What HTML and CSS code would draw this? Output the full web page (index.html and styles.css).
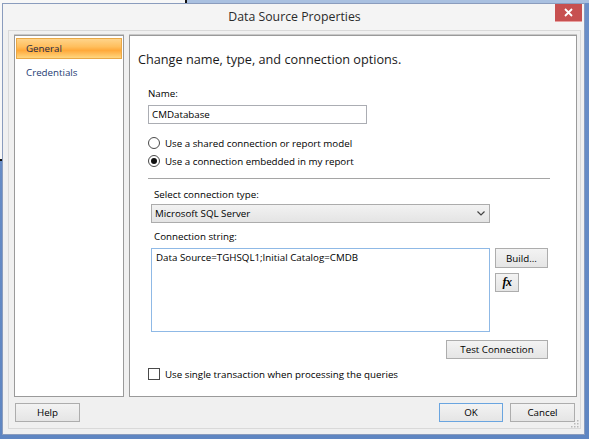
FILE: index.html
```html
<!DOCTYPE html>
<html>
<head>
<meta charset="utf-8">
<link rel="stylesheet" href="styles.css">
</head>
<body>
<div class="bgwin"></div>
<div class="desktop">
  <div class="dialog">
    <div class="titlebar">
      <span></span>
      <div class="title">Data Source Properties</div>
      <div class="close-cell">
        <div class="close"><svg width="9" height="9" viewBox="0 0 9 9"><path d="M1 1L8 8M8 1L1 8" stroke="#fff" stroke-width="1.8"/></svg></div>
      </div>
    </div>
    <div class="frame">
      <div class="panes">
        <nav class="nav">
          <div class="nav-item active">General</div>
          <div class="nav-item">Credentials</div>
        </nav>
        <section class="content">
          <h1 class="heading">Change name, type, and connection options.</h1>
          <div class="form">
            <div class="lbl">Name:</div>
            <div class="textbox">CMDatabase</div>
            <div class="opt-row first"><span class="radio"></span>Use a shared connection or report model</div>
            <div class="opt-row"><span class="radio checked"></span>Use a connection embedded in my report</div>
            <div class="sep"></div>
            <div class="conn">
              <div class="lbl sub first-sub">Select connection type:</div>
              <div class="select"><span>Microsoft SQL Server</span><svg width="8" height="5" viewBox="0 0 8 5"><path d="M0.5 0.5L4 4L7.5 0.5" fill="none" stroke="#444" stroke-width="1.2"/></svg></div>
              <div class="lbl sub conn-lbl">Connection string:</div>
              <div class="conn-grid">
                <div class="textarea">Data Source=TGHSQL1;Initial Catalog=CMDB</div>
                <div class="side">
                  <div class="btn build">Build...</div>
                  <div class="btn fx"><span>fx</span></div>
                </div>
              </div>
              <div class="test-row"><div class="btn test">Test Connection</div></div>
            </div>
            <div class="opt-row check-row"><span class="checkbox"></span>Use single transaction when processing the queries</div>
          </div>
        </section>
      </div>
      <div class="buttons">
        <div class="btn help">Help</div>
        <span class="spacer"></span>
        <div class="btn ok">OK</div>
        <div class="btn cancel">Cancel</div>
      </div>
    </div>
    <svg class="grip" width="8" height="8" viewBox="0 0 8 8">
      <rect x="6" y="0" width="1.5" height="1.5" fill="#b8b8b8"/>
      <rect x="3" y="3" width="1.5" height="1.5" fill="#b8b8b8"/>
      <rect x="6" y="3" width="1.5" height="1.5" fill="#b8b8b8"/>
      <rect x="0" y="6" width="1.5" height="1.5" fill="#b8b8b8"/>
      <rect x="3" y="6" width="1.5" height="1.5" fill="#b8b8b8"/>
      <rect x="6" y="6" width="1.5" height="1.5" fill="#b8b8b8"/>
    </svg>
  </div>
</div>
</body>
</html>
```

FILE: styles.css
```css
* { box-sizing: border-box; }
html, body {
  margin: 0;
  padding: 0;
  width: 589px;
  height: 439px;
  overflow: hidden;
}
body {
  background: linear-gradient(#a9c0e0 0, #a9c0e0 3px, #6b8fc8 3px, #5f86c2 100%);
  font-family: "Open Sans", "Noto Sans", sans-serif;
  font-size: 9.75px;
  color: #000;
  position: relative;
}
.bgwin {
  position: absolute;
  left: 0;
  top: 0;
  width: 187px;
  height: 161px;
  background: #f7f7f7;
  border-right: 2px solid #111;
  border-bottom: 2px solid #111;
}
.desktop {
  position: relative;
  padding: 3px 4px 4px 2px;
}
.dialog {
  position: relative;
  width: 583px;
  height: 432px;
  background: #f0f0f0;
  border: 1px solid #8a9cbd;
  display: flex;
  flex-direction: column;
}
.titlebar {
  height: 26px;
  display: grid;
  grid-template-columns: 1fr auto 1fr;
  background: #f4f4f4;
}
.title {
  font-size: 12.3px;
  line-height: 26px;
  color: #2b2b2b;
  padding-left: 2px;
}
.close-cell {
  display: flex;
  justify-content: flex-end;
  align-items: flex-start;
  padding-right: 2px;
}
.close {
  width: 27px;
  height: 18px;
  background: #c75050;
  border-bottom: 1px solid #e8a0a0;
  display: flex;
  align-items: center;
  justify-content: center;
}
.frame {
  margin: 0 3px 0 5px;
  height: 399px;
  border: 1px solid #d9d9d9;
  padding: 4px 3px 0 5px;
  display: flex;
  flex-direction: column;
}
.panes {
  display: flex;
  gap: 5px;
  height: 362px;
}
.nav {
  width: 110px;
  background: #fff;
  border: 1px solid #9a9a9a;
  box-shadow: 0 -1px 0 #c8c8c8;
  padding: 2px 1px 0 1px;
}
.nav-item {
  height: 21px;
  line-height: 20px;
  padding-left: 9px;
  border: 1px solid transparent;
  margin-bottom: 3px;
  color: #1d3b73;
}
.nav-item.active {
  color: #1b2a4a;
  border-color: #e9a846;
  background: linear-gradient(#ffd48a 0%, #ffbf5e 40%, #ffa93a 60%, #ffd67f 100%);
}
.content {
  width: 448px;
  background: #fff;
  border: 1px solid #9a9a9a;
  box-shadow: 0 -1px 0 #c8c8c8;
  padding-left: 8px;
}
.heading {
  margin: 14px 0 0 0;
  font-size: 12.7px;
  font-weight: normal;
  line-height: 18px;
  color: #1a1a1a;
}
.form {
  padding-left: 10px;
}
.lbl {
  margin-top: 19px;
  line-height: 14px;
  height: 14px;
}
.textbox {
  margin-top: 4px;
  width: 219px;
  height: 19px;
  border: 1px solid #abadb3;
  padding-left: 3px;
  line-height: 17px;
}
.opt-row {
  height: 16px;
  margin-top: 2px;
  display: flex;
  align-items: center;
  gap: 5px;
}
.opt-row.first {
  margin-top: 11px;
}
.radio {
  width: 12px;
  height: 12px;
  border: 1px solid #4a4a4a;
  border-radius: 50%;
  background: #fff;
  display: flex;
  align-items: center;
  justify-content: center;
}
.radio.checked::after {
  content: "";
  width: 6px;
  height: 6px;
  border-radius: 50%;
  background: #111;
}
.sep {
  margin-top: 9px;
  width: 402px;
  height: 1px;
  background: #a5a5a5;
}
.conn {
  margin-left: 3px;
  width: 397px;
}
.lbl.sub {
  padding-left: 3px;
}
.lbl.first-sub {
  margin-top: 9px;
}
.select {
  margin-top: 2px;
  width: 339px;
  height: 19px;
  border: 1px solid #acacac;
  background: linear-gradient(#f2f2f2, #e4e4e4);
  display: flex;
  align-items: center;
  justify-content: space-between;
  padding: 0 4px 0 3px;
}
.lbl.conn-lbl {
  margin-top: 7px;
}
.conn-grid {
  margin-top: 4px;
  display: flex;
  gap: 5px;
}
.textarea {
  width: 339px;
  height: 84px;
  border: 1px solid #8fb9e6;
  padding: 2px 4px;
  line-height: 14px;
}
.side {
  display: flex;
  flex-direction: column;
  gap: 5px;
  align-items: flex-start;
}
.btn {
  height: 19px;
  border: 1px solid #adadad;
  background: linear-gradient(#f3f3f3, #e5e5e5);
  display: flex;
  align-items: center;
  justify-content: center;
  color: #000;
}
.build {
  width: 53px;
  height: 20px;
}
.fx {
  width: 24px;
  height: 19px;
}
.fx span {
  font-family: "Liberation Serif", "DejaVu Serif", serif;
  font-style: italic;
  font-weight: bold;
  font-size: 12px;
  letter-spacing: -0.5px;
}
.test-row {
  margin-top: 8px;
  display: flex;
  justify-content: flex-end;
}
.test {
  width: 102px;
}
.check-row {
  margin-top: 8px;
  height: 14px;
}
.checkbox {
  width: 12px;
  height: 12px;
  border: 1px solid #4a4a4a;
  background: #fff;
}
.buttons {
  margin-top: 6px;
  display: flex;
  gap: 7px;
  padding: 0 2px 0 1px;
}
.spacer {
  flex: 1;
}
.help {
  width: 65px;
}
.ok {
  width: 64px;
  border-color: #6aa5e0;
}
.cancel {
  width: 65px;
}
.grip {
  position: absolute;
  right: 5px;
  bottom: 6px;
}
```
